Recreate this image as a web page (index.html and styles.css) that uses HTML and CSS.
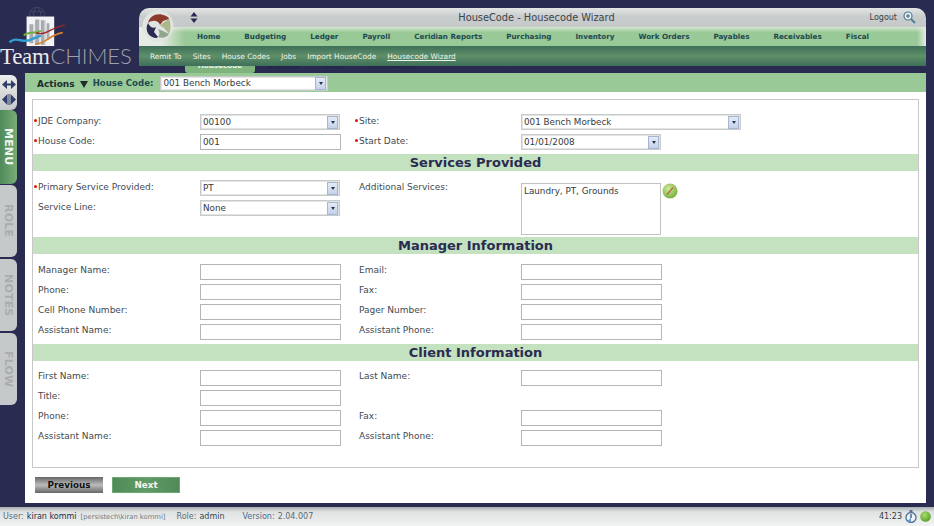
FILE: index.html
```html
<!DOCTYPE html>
<html lang="en">
<head>
<meta charset="utf-8">
<title>HouseCode - Housecode Wizard</title>
<link rel="stylesheet" href="styles.css">
</head>
<body>
<div class="page">
  <header class="top">
    <div class="brand">
      <svg class="brand-art" viewBox="0 0 60 42" width="60" height="42">
        <path d="M21 10 C21 3 25 0 29 0 C33 0 37 3 37 10 M25 10 C25 4 27 1 29 0 C31 1 33 4 33 10 M22 5 H36" fill="none" stroke="#565a70" stroke-width=".6"/>
        <rect x="18" y="10" width="29" height="31" fill="#f3f3f3"/>
        <path d="M21 18h4v20h-4zM27 13h4v27h-4zM33 14h4v26h-4zM39 17h3v17h-3z" fill="#a9abb2"/>
        <path d="M25 18h1.500v20H25zM31 13h1.500v27H31zM37 14h1.500v26H37z" fill="#dcdce0"/>
        <path d="M0 37 C8 30 14 39 23 34 C27 32 30 31 33 30" fill="none" stroke="#2f9fd0" stroke-width="2.500"/>
        <path d="M15 30 C20 25 25 29 33 25" fill="none" stroke="#6fae3a" stroke-width="2"/>
        <path d="M28 27 C38 31 44 21 58 19" fill="none" stroke="#a02a2a" stroke-width="1.500"/>
        <path d="M27 39 C38 39 42 29 56 27" fill="none" stroke="#d8832a" stroke-width="1.800"/>
      </svg>
      <div class="brand-name"><span class="brand-team">Team</span><span class="brand-chimes">CHIMES</span></div>
    </div>
    <div class="nav-wrap">
      <nav class="nav">
        <svg class="swirl" viewBox="0 0 32 32" width="32" height="32">
          <circle cx="16" cy="16" r="15.500" fill="#e2e4e1"/>
          <path d="M6 13 C8 5 16 2 24 6 C26 7 27 8 27 9 L21 11 L18 15 C17 11 11 9 6 13Z" fill="#8c3a2e"/>
          <path d="M6 13 C3 19 5 26 13 28 C14 28 15 28 16 27 L12 22 L14 17 C11 19 8 17 6 13Z" fill="#2a2b50"/>
          <path d="M16 27 C21 29 25 27 27 24 L21 21 L16 19 C18 22 18 25 16 27Z" fill="#8fa78c"/>
          <path d="M27 24 C29 19 29 13 27 9 L21 13 L18 16 C21 16 24 20 27 24Z" fill="#a9b98a"/>
        </svg>
        <div class="nav-title">
          <svg class="updown" viewBox="0 0 8 11" width="8" height="11"><path d="M4 0l3.500 4.500h-7zM4 11l3.500-4.500h-7z" fill="#2a2b50"/></svg>
          <span class="title-text">HouseCode - Housecode Wizard</span>
          <span class="logout">Logout</span>
          <svg class="zoom-icon" viewBox="0 0 13 13" width="13" height="13">
            <circle cx="5" cy="5" r="4" fill="#e8eef2" stroke="#4d7f96" stroke-width="1.200"/>
            <path d="M3 5h4M5 3v4" stroke="#35607a" stroke-width="1"/>
            <path d="M8 8l4 4" stroke="#4d7f96" stroke-width="2"/>
          </svg>
        </div>
        <div class="menu">
          <a>Home</a><a>Budgeting</a><a>Ledger</a><a>Payroll</a><a>Ceridian Reports</a><a>Purchasing</a><a>Inventory</a><a>Work Orders</a><a>Payables</a><a>Receivables</a><a>Fiscal</a>
        </div>
        <div class="submenu">
          <a>Remit To</a><a>Sites</a><a>House Codes</a><a>Jobs</a><a>Import HouseCode</a><a class="current">Housecode Wizard</a>
        </div>
      </nav>
      <div class="peek">
        <span class="peek-active">Housecode</span><span class="peek-tab">Reports</span><span class="peek-tab">Setup</span><span class="peek-tab">Information</span>
      </div>
    </div>
  </header>

  <div class="middle">
    <aside class="side">
      <div class="side-arrows">
        <svg viewBox="0 0 14 9" width="14" height="9"><path d="M0 4.500l5-4.500v9zM14 4.500l-5-4.500v9z" fill="#2f3f6b"/><path d="M4 3.500h6v2H4z" fill="#2f3f6b"/></svg>
        <svg viewBox="0 0 14 11" width="14" height="11"><path d="M5.500 0v11L0 5.500zM8.500 0v11L14 5.500z" fill="#2f3f6b"/><path d="M6.500 0h1v11h-1z" fill="#2f3f6b"/></svg>
      </div>
      <div class="side-tab side-on"><span>MENU</span></div>
      <div class="side-tab"><span>ROLE</span></div>
      <div class="side-tab"><span>NOTES</span></div>
      <div class="side-tab"><span>FLOW</span></div>
    </aside>

    <main class="main">
      <div class="actions">
        <span class="actions-label">Actions</span>
        <svg class="actions-arrow" viewBox="0 0 8 7" width="8" height="7"><path d="M0 0h8L4 7z" fill="#1c2b2b"/></svg>
        <span class="hc-label">House Code:</span>
        <div class="select hc-select"><span class="select-text">001 Bench Morbeck</span><span class="select-btn"></span></div>
      </div>

      <div class="content">
        <div class="box">
          <div class="block block-first">
            <div class="row">
              <label class="lbl req">JDE Company:</label>
              <div class="select w-std"><span class="select-text">00100</span><span class="select-btn"></span></div>
              <label class="lbl req">Site:</label>
              <div class="select w-wide"><span class="select-text">001 Bench Morbeck</span><span class="select-btn"></span></div>
            </div>
            <div class="row">
              <label class="lbl req">House Code:</label>
              <input class="field" value="001">
              <label class="lbl req">Start Date:</label>
              <div class="select w-date"><span class="select-text">01/01/2008</span><span class="select-btn"></span></div>
            </div>
          </div>

          <h2 class="sect">Services Provided</h2>
          <div class="block block-services">
            <div class="svc-left">
              <div class="row-half">
                <label class="lbl req">Primary Service Provided:</label>
                <div class="select w-std"><span class="select-text">PT</span><span class="select-btn"></span></div>
              </div>
              <div class="row-half">
                <label class="lbl">Service Line:</label>
                <div class="select w-std"><span class="select-text">None</span><span class="select-btn"></span></div>
              </div>
            </div>
            <div class="svc-right">
              <label class="lbl">Additional Services:</label>
              <div class="multi">Laundry, PT, Grounds</div>
              <svg class="edit-icon" viewBox="0 0 16 16" width="16" height="16">
                <defs><radialGradient id="ball" cx=".4" cy=".35" r=".75"><stop offset="0" stop-color="#d2eb9a"/><stop offset="1" stop-color="#6aa832"/></radialGradient></defs>
                <circle cx="8" cy="8" r="7.500" fill="url(#ball)"/>
                <path d="M5 11.500 L11 4.500" stroke="#b8664a" stroke-width="1.300"/>
              </svg>
            </div>
          </div>

          <h2 class="sect">Manager Information</h2>
          <div class="block block-info">
            <div class="row"><label class="lbl">Manager Name:</label><input class="field"><label class="lbl">Email:</label><input class="field"></div>
            <div class="row"><label class="lbl">Phone:</label><input class="field"><label class="lbl">Fax:</label><input class="field"></div>
            <div class="row"><label class="lbl">Cell Phone Number:</label><input class="field"><label class="lbl">Pager Number:</label><input class="field"></div>
            <div class="row"><label class="lbl">Assistant Name:</label><input class="field"><label class="lbl">Assistant Phone:</label><input class="field"></div>
          </div>

          <h2 class="sect">Client Information</h2>
          <div class="block block-info block-client">
            <div class="row"><label class="lbl">First Name:</label><input class="field"><label class="lbl">Last Name:</label><input class="field"></div>
            <div class="row"><label class="lbl">Title:</label><input class="field"></div>
            <div class="row"><label class="lbl">Phone:</label><input class="field"><label class="lbl">Fax:</label><input class="field"></div>
            <div class="row"><label class="lbl">Assistant Name:</label><input class="field"><label class="lbl">Assistant Phone:</label><input class="field"></div>
          </div>
        </div>

        <div class="buttons">
          <button class="btn btn-prev">Previous</button>
          <button class="btn btn-next">Next</button>
        </div>
      </div>
    </main>
  </div>

  <footer class="status">
    <span class="st-key">User:</span> <span class="st-val st-user">kiran kommi</span>
    <span class="st-small">[persistech\kiran kommi]</span>
    <span class="st-key st-role">Role:</span> <span class="st-val">admin</span>
    <span class="st-ver">Version:</span> <span class="st-key">2.04.007</span>
    <span class="st-right">
      <span class="st-time">41:23</span>
      <svg viewBox="0 0 12 13" width="12" height="13"><circle cx="6" cy="7.500" r="5" fill="#eef3f6" stroke="#4d7196" stroke-width="1.300"/><path d="M6 4v4M4.500 1h3" stroke="#35507a" stroke-width="1.300"/><path d="M6 7.500V12.500A5 5 0 0 1 2.500 11z" fill="#6d9cc6"/></svg>
      <svg viewBox="0 0 11 11" width="11" height="11"><defs><radialGradient id="led" cx=".4" cy=".35" r=".75"><stop offset="0" stop-color="#a8dc6a"/><stop offset="1" stop-color="#4f9a22"/></radialGradient></defs><circle cx="5.500" cy="5.500" r="5.300" fill="url(#led)"/></svg>
    </span>
  </footer>
</div>
</body>
</html>
```
FILE: styles.css
```css
* { box-sizing: border-box; }
html, body { margin: 0; padding: 0; }
body { width: 934px; height: 526px; overflow: hidden; background: #2a2b50; font-family: "DejaVu Sans", Verdana, sans-serif; font-size: 9px; color: #3f4a50; }
.page { display: flex; flex-direction: column; height: 526px; }

/* header */
.top { display: flex; height: 73px; flex: none; }
.brand { width: 139px; flex: none; display: flex; flex-direction: column; align-items: flex-start; padding-top: 7px; }
.brand-art { margin-left: 8px; display: block; }
.brand-name { line-height: 24px; margin-top: -3px; white-space: nowrap; }
.brand-team { font-family: "Liberation Serif", serif; font-size: 23px; letter-spacing: -.3px; color: #e8e8e8; }
.brand-chimes { font-family: "Lato", sans-serif; font-size: 22px; font-weight: 300; color: #9ea1ad; letter-spacing: -.1px; margin-left: 1px; }

.nav-wrap { width: 787px; flex: none; padding-top: 8px; display: flex; flex-direction: column; }
.nav { position: relative; height: 58px; flex: none; display: flex; flex-direction: column; border-radius: 10px 10px 0 0; overflow: hidden; }
.swirl { position: absolute; left: 3px; top: 2px; }
.nav-title { height: 19px; flex: none; display: flex; align-items: center; background: linear-gradient(#e4e6e6 0, #c9cccc 45%, #c6c9c9 100%); padding: 0 10px 0 51px; }
.updown { flex: none; }
.title-text { position: absolute; left: 0; right: 0; top: 3px; text-align: center; padding-left: 8px; font-size: 9.800px; line-height: 13px; color: #39444c; }
.logout { margin-left: auto; font-size: 8px; color: #39444c; margin-right: 6px; }
.zoom-icon { flex: none; }
.menu { height: 19px; flex: none; display: flex; align-items: center; gap: 24px; padding-left: 58px; background: linear-gradient(90deg, #e6ebe4 0, #e6ebe4 22px, rgba(230,235,228,0) 46px, rgba(230,235,228,0) 778px, #dfe8dc 786px), linear-gradient(#d7e6d2 0, #98c997 28%, #98c997 100%); font-size: 7.200px; font-weight: 700; color: #1e4a50; white-space: nowrap; }
.submenu { height: 20px; flex: none; display: flex; align-items: center; gap: 11px; padding-left: 11px; background: linear-gradient(#3e6f5a 0, #5f9068 50%, #3e6f5a 100%); font-size: 7.400px; color: #eef5ee; white-space: nowrap; }
.submenu .current { text-decoration: underline; }
.peek { height: 7px; overflow: hidden; display: flex; align-items: flex-start; padding-left: 46px; font-size: 7.200px; font-weight: 700; line-height: 0; white-space: nowrap; color: #1f2545; }
.peek-active { width: 70px; height: 7px; margin-right: -11px; text-align: center; background: #7fb47f; color: #e8f3e8; border-radius: 0 0 3px 3px; }
.peek-tab { margin-left: 23px; }

/* layout */
.middle { flex: 1; min-height: 0; display: flex; }
.side { width: 25px; flex: none; padding-top: 2px; display: flex; flex-direction: column; }
.side-arrows { width: 17px; height: 35px; background: linear-gradient(#eceded, #c6c9c9); border-radius: 0 6px 6px 0; display: flex; flex-direction: column; align-items: center; justify-content: center; gap: 5px; }
.side-tab { width: 17px; height: 72px; margin-bottom: 2px; background: #c6c9c9; border-radius: 0 6px 6px 0; display: flex; align-items: center; justify-content: center; }
.side-tab span { writing-mode: vertical-rl; font-size: 11px; font-weight: 700; color: #a9adae; letter-spacing: .2px; }
.side-on { height: 74px; margin-bottom: 1px; background: linear-gradient(90deg, #4f8a58, #79ad78); }
.side-on span { color: #eef5ee; }
.main { width: 901px; flex: none; height: 430px; display: flex; flex-direction: column; }
.actions { height: 19px; flex: none; background: #98c997; display: flex; align-items: center; padding-left: 12px; }
.actions-label { font-size: 9px; font-weight: 700; color: #1c2b2b; margin-top: 3px; }
.actions-arrow { margin: 3px 5px 0 5px; }
.hc-label { font-size: 8.600px; font-weight: 700; color: #1e4a50; margin: 1px 7px 0 0; }
.content { flex: 1; background: #fff; padding: 7px; display: flex; flex-direction: column; }
.box { height: 369px; flex: none; border: 1px solid #c8c8c8; }

/* form */
.block-first { padding-top: 14px; height: 54px; }
.block-services { height: 66px; display: flex; }
.block-info { height: 90px; padding-top: 10px; }
.block-client { padding-top: 9px; }
.row { display: grid; grid-template-columns: 167px 154px 167px 1fr; height: 20px; align-items: start; }
.row-half { display: grid; grid-template-columns: 167px 154px; height: 20px; align-items: start; }
.svc-left { width: 321px; flex: none; padding-top: 9px; }
.svc-right { flex: 1; display: grid; grid-template-columns: 167px 140px 20px; align-items: start; padding-top: 12px; }
.lbl { display: block; padding-left: 5px; line-height: 13px; white-space: nowrap; font-size: 9px; color: #3f4a50; }
.block-first .lbl, .svc-left .lbl { margin-top: 1px; }
.block-client .lbl { margin-top: 0; }
.req { position: relative; }
.req::before { content: ""; position: absolute; left: 1px; top: 4px; width: 3px; height: 3px; border-radius: 50%; background: #e01010; }
.svc-right .lbl { margin-top: -2px; }
.field { display: block; width: 141px; height: 16px; border: 1px solid #b4b6b6; padding: 0 2px; margin: 0; font: 8.800px "DejaVu Sans", Verdana, sans-serif; color: #333b40; background: #fff; border-radius: 0; outline: 0; }
.select { display: flex; align-items: center; height: 16px; border: 1px solid #c9cbcb; background: #fff; box-shadow: inset 0 0 0 1px #e2e3e3; padding-right: 1px; }
.select-text { flex: 1; padding-left: 2px; font-size: 8.800px; color: #333b40; white-space: nowrap; }
.select-btn { position: relative; width: 11px; height: 13px; flex: none; background: linear-gradient(#e4ebf6, #c4d2ea); border: 1px solid #a4b6d2; }
.select-btn::after { content: ""; position: absolute; left: 2.500px; top: 4px; border: 2.500px solid transparent; border-top: 3px solid #2a3450; border-bottom: 0; }
.w-std { width: 140px; }
.w-wide { width: 220px; }
.w-date { width: 140px; }
.hc-select { width: 168px; height: 15px; margin-top: 1px; }
.multi { width: 140px; height: 52px; border: 1px solid #c0c2c2; padding: 1px 2px; font-size: 8.800px; line-height: 13px; color: #333b40; }
.edit-icon { margin: 0 0 0 1px; }
.sect { margin: 0; height: 17px; background: #c4e1c0; text-align: center; font-size: 13px; line-height: 17px; font-weight: 700; color: #2a2b50; }

/* buttons */
.buttons { display: flex; gap: 9px; padding: 9px 0 0 3px; }
.btn { height: 16px; padding: 0; border: 0; font: 700 8.800px "DejaVu Sans", Verdana, sans-serif; border-radius: 0; }
.btn-prev { width: 68px; color: #111; background: linear-gradient(#666 0, #bcbcbc 50%, #666 100%); }
.btn-next { width: 68px; color: #f0f6ef; background: linear-gradient(90deg, #4f8a58, #609a66 50%, #4f8a58); box-shadow: inset 0 0 0 1px #6da873; }

/* status */
.status { margin-top: auto; height: 19px; flex: none; display: flex; align-items: center; gap: 3px; padding: 0 3px 0 3px; background: linear-gradient(#a8adb0 0, #dfe2e2 25%, #f2f3f3 100%); font-size: 8px; white-space: nowrap; }
.st-key { color: #5d6a72; }
.st-val { color: #2f4a50; }
.st-user { color: #1e3040; }
.st-small { font-size: 6.800px; color: #6f7a80; margin-left: 1px; }
.st-role { margin-left: 8px; }
.st-ver { margin-left: 15px; color: #4d6a8c; }
.st-right { margin-left: auto; display: flex; align-items: center; gap: 3px; }
.st-time { color: #333b40; }
```
